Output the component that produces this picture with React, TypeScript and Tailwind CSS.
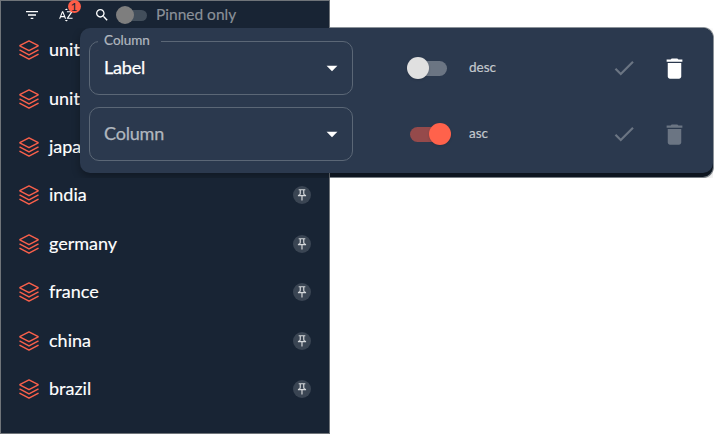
const paths = {
  filter: "M10 18h4v-2h-4v2zM3 6v2h18V6H3zm3 7h12v-2H6v2z",
  alpha:
    "M14.94 4.66h-4.72l2.36-2.36zm-4.69 14.71h4.66l-2.33 2.33zM6.1 6.27 1.6 17.73h1.84l.92-2.45h5.11l.92 2.45h1.84L7.74 6.27zm-1.13 7.37 1.94-5.18 1.94 5.18zm10.76 2.5h6.12v1.59h-8.53v-1.29l5.92-8.56h-5.88v-1.6h8.3v1.26z",
  search:
    "M15.5 14h-.79l-.28-.27C15.41 12.59 16 11.11 16 9.5 16 5.91 13.09 3 9.5 3S3 5.91 3 9.5 5.91 16 9.5 16c1.61 0 3.09-.59 4.23-1.57l.27.28v.79l5 4.99L20.49 19l-4.99-5zm-6 0C7.01 14 5 11.99 5 9.5S7.01 5 9.5 5 14 7.01 14 9.5 11.99 14 9.5 14z",
  trash:
    "M6 19c0 1.1.9 2 2 2h8c1.1 0 2-.9 2-2V7H6v12zM19 4h-3.5l-1-1h-5l-1 1H5v2h14V4z",
  check: "M9 16.17L4.83 12l-1.42 1.41L9 19 21 7l-1.41-1.41z",
  arrow: "M7 10l5 5 5-5z",
  pin: "M14 4v5c0 1.12.37 2.16 1 3H9c.65-.86 1-1.9 1-3V4h4m3-2H7c-.55 0-1 .45-1 1s.45 1 1 1h1v5c0 1.66-1.34 3-3 3v2h5.97v7l1 1 1-1v-7H19v-2c-1.66 0-3-1.34-3-3V4h1c.55 0 1-.45 1-1s-.45-1-1-1z",
};

function Icon({ name, className }: { name: keyof typeof paths; className: string }) {
  return (
    <svg viewBox="0 0 24 24" fill="currentColor" className={"shrink-0 " + className}>
      <path d={paths[name]} />
    </svg>
  );
}

function Layers() {
  return (
    <svg
      viewBox="0 0 20 20"
      fill="none"
      stroke="currentColor"
      strokeWidth="1.5"
      strokeLinejoin="round"
      strokeLinecap="round"
      className="size-5 shrink-0 text-[#f9604b]"
    >
      <path d="M10 .9 18.8 5.3Q19.4 5.7 18.8 6.1L10 10.7 1.2 6.1Q.6 5.7 1.2 5.3Z" />
      <path d="m1 10.2 9 4.7 9-4.7" />
      <path d="m1 14.4 9 4.7 9-4.7" />
    </svg>
  );
}

const items = ["united", "united", "japan", "india", "germany", "france", "china", "brazil"];

function Sidebar() {
  return (
    <aside className="flex h-[434px] w-[330px] flex-col border border-[#6f7479] bg-[#182434]">
      <header className="flex h-[25px] items-center pt-[3px] text-white">
        <Icon name="filter" className="ml-[22.5px] size-4" />
        <div className="relative ml-[18.5px]">
          <Icon name="alpha" className="size-4" />
          <span className="absolute -top-[7px] left-[9.5px] flex size-[13px] items-center justify-center rounded-full bg-[#ff5d47] text-xs leading-[13px] text-[#182434]">
            1
          </span>
        </div>
        <Icon name="search" className="ml-[19.5px] size-4" />
        <div className="ml-[6.5px] flex w-8 items-center">
          <span className="z-10 size-[18px] rounded-full bg-[#7e7e7e]" />
          <span className="-ml-3.5 h-[11px] w-[27px] rounded-full bg-[#424e5b]" />
        </div>
        <span className="ml-2 text-[15.5px] whitespace-nowrap text-[#8b9199] [-webkit-text-stroke:0.15px]">
          Pinned only
        </span>
      </header>
      <ul>
        {items.map((item, i) => (
          <li key={i} className="flex h-[48.4px] items-center pr-[18px] pl-[18px] text-white">
            <Layers />
            <span className="ml-[10px] flex-1 pb-0.5 text-lg leading-6 [-webkit-text-stroke:0.15px]">{item}</span>
            {i > 2 && (
              <span className="flex size-[18px] items-center justify-center rounded-full bg-[#3a4553] text-[#d4d7da]">
                <Icon name="pin" className="size-3.5" />
              </span>
            )}
          </li>
        ))}
      </ul>
    </aside>
  );
}

function ColumnSelect({ value }: { value?: string }) {
  return (
    <fieldset className="flex h-[54px] w-[264px] items-center justify-between rounded-[10px] border border-[#5b6776] pr-[7px] pl-[14px]">
      <span
        className={
          "pb-0.5 text-lg tracking-[-0.01em] [-webkit-text-stroke:0.25px] " + (value ? "text-white" : "text-[#b1b7bf]")
        }
      >
        {value ?? "Column"}
      </span>
      <Icon name="arrow" className="size-[26px] text-white" />
    </fieldset>
  );
}

function SortRow({ value, asc }: { value?: string; asc?: boolean }) {
  return (
    <div className="flex h-[54px] items-center">
      <div className="relative">
        <ColumnSelect value={value} />
        {value && (
          <span className="absolute -top-[10px] left-[9px] w-[63px] bg-[#2b394e] pl-[6px] text-[13.5px] leading-[18px] text-[#b1b7bf] [-webkit-text-stroke:0.2px]">
            Column
          </span>
        )}
      </div>
      <div className="ml-[54px] flex w-[44px] items-center">
        {asc ? (
          <>
            <span className="ml-[3px] h-[15px] w-[38px] rounded-full bg-[#954a4b]" />
            <span className="-ml-[19px] size-[22px] shrink-0 rounded-full bg-[#ff624b] shadow-sm" />
          </>
        ) : (
          <>
            <span className="z-10 size-[22px] shrink-0 rounded-full bg-[#e0e0e0] shadow-sm" />
            <span className="-ml-[19px] h-[15px] w-[37px] rounded-full bg-[#6b7583]" />
          </>
        )}
      </div>
      <span className="ml-[18px] w-[142px] pb-0.5 text-[13.5px] text-[#c3c8cd] [-webkit-text-stroke:0.2px]">
        {asc ? "asc" : "desc"}
      </span>
      <Icon name="check" className="size-[26px] text-[#6b7583]" />
      <Icon
        name="trash"
        className={asc ? "ml-6 size-[27px] text-[#6b7583]" : "ml-6 size-[27px] text-white"}
      />
    </div>
  );
}

export default function App() {
  return (
    <main className="relative h-[434px] w-[715px] overflow-hidden bg-white font-['Lato',sans-serif]">
      <Sidebar />
      <div className="absolute top-[27px] left-[330px] h-[151px] w-[384px] rounded-r-[11px] border border-l-0 border-[#8b9299] bg-[#111b28]" />
      <section className="absolute top-7 left-20 flex h-[145px] w-[633px] flex-col gap-3 rounded-[10px] bg-[#2b394e] pt-[13px] pl-[9px] shadow-[0_4px_8px_rgba(0,0,0,0.3)] [clip-path:inset(0_0_-5px_-12px)]">
        <SortRow value="Label" />
        <SortRow asc />
      </section>
    </main>
  );
}
